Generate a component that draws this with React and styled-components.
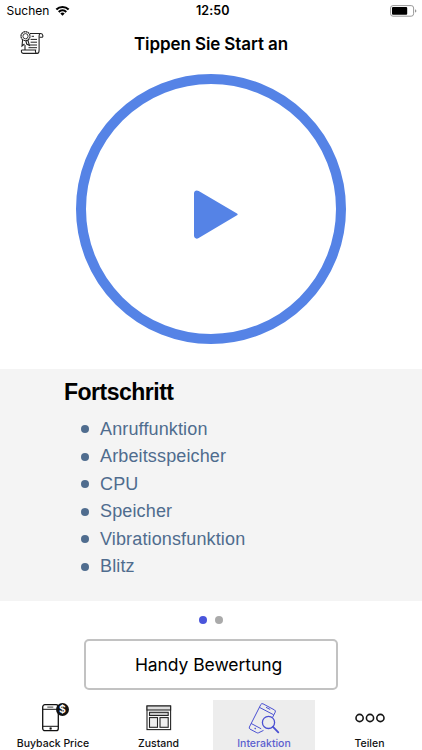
import styled, { createGlobalStyle } from "styled-components";

const progressItems = [
  "Anruffunktion",
  "Arbeitsspeicher",
  "CPU",
  "Speicher",
  "Vibrationsfunktion",
  "Blitz",
];

const WifiIcon = () => (
  <svg width="15" height="11" viewBox="0 0 15 11">
    <path d="M0.6 3.8 A9.8 9.8 0 0 1 14.4 3.8 L12.9 5.3 A7.7 7.7 0 0 0 2.1 5.3 Z" />
    <path d="M3 6.2 A6.4 6.4 0 0 1 12 6.2 L10.5 7.7 A4.3 4.3 0 0 0 4.5 7.7 Z" />
    <path d="M5.3 8.5 A3.1 3.1 0 0 1 9.7 8.5 L7.5 10.7 Z" />
  </svg>
);

const BatteryIcon = () => (
  <svg width="27" height="12" viewBox="0 0 27 12">
    <rect x="0.6" y="0.6" width="23" height="10.6" rx="2.4" fill="#fff" stroke="#999" />
    <rect x="2" y="2" width="15.2" height="7.8" rx="1" fill="#000" />
    <path d="M25 4.2 Q26.4 4.7 26.4 5.9 T25 7.6 Z" fill="#999" />
  </svg>
);

const CertificateIcon = () => (
  <svg width="24" height="24" viewBox="0 0 24 24" fill="none" stroke="#222" strokeWidth="1.1">
    <circle cx="5.5" cy="5.2" r="4.5" strokeWidth="1.2" strokeDasharray="1.9 0.4" />
    <circle cx="5.5" cy="5.2" r="2.6" strokeWidth="0.9" />
    <path d="M2.6 9 L2 15 L4.5 13 M7.8 9 L9.4 14.4 L6.7 13 L5.8 9.6" />
    <path d="M10 2.5 H20.5 C23.2 2.5 23.3 6.2 22.2 6.2 H19.8 M20 2.6 Q19.1 3.5 19.1 5 V19" />
    <path d="M5 14 V18.8 M1.5 19 H15.6 C15 21 16 22.4 17.3 22.4 C19 22.4 19.1 21 19.1 19 M17.3 22.4 H3.2 C1.5 22.4 1.2 20.5 1.5 19" />
    <path d="M11.6 5.3 H14 M10.6 8.4 H17 M10.6 11.2 H17 M9.5 14 H17 M8.5 16.7 H17" strokeWidth="1" />
  </svg>
);

const PlayIcon = () => (
  <svg width="44" height="50" viewBox="0 0 44 50" fill="#5583e6">
    <path d="M0 3.5 C0 .7 2.5 -.3 4.7 1 L43 23.5 Q44.3 24.5 43 25.3 L4.7 48 C2.5 49.4 0 48.4 0 45.6 Z" />
  </svg>
);

const PhonePriceIcon = () => (
  <svg width="28" height="30" viewBox="0 0 28 30" fill="none" stroke="#111">
    <rect x="1.7" y="1.7" width="15.6" height="26" rx="2.2" strokeWidth="1.3" />
    <path d="M1.7 6.3 H17.3 M1.7 23.3 H17.3" />
    <path d="M6.3 4.1 H12.3" strokeWidth="0.8" />
    <rect x="8.9" y="24.8" width="1.4" height="1.4" fill="#111" strokeWidth="0.6" />
    <circle cx="21.5" cy="6.5" r="6.5" fill="#111" stroke="none" />
    <text x="21.5" y="10.3" textAnchor="middle" fill="#fff" stroke="none" fontFamily="Inter, sans-serif" fontWeight="600" fontSize="10.5">$</text>
  </svg>
);

const LayoutIcon = () => (
  <svg width="26" height="26" viewBox="0 0 26 26" fill="none" stroke="#252525" strokeWidth="1.1">
    <rect x="1" y="1" width="23.6" height="23.6" />
    <rect x="1" y="1" width="23.6" height="4" fill="#ddd" />
    <rect x="3.5" y="7.3" width="18.7" height="3.2" fill="#ccc" />
    <rect x="3.5" y="12.6" width="8" height="9.7" fill="#eee" />
    <rect x="14" y="12.6" width="8.2" height="9.7" fill="#eee" />
  </svg>
);

const PhoneSearchIcon = () => (
  <svg width="32" height="33" viewBox="0 0 32 33" fill="none" stroke="#4a50d2" strokeWidth="1">
    <path d="M15.5 28.4 L10.5 30.8 Q9.7 31.2 8.8 30.7 L2 27.1 Q.8 26.4 1.4 25 L12.9 2.4 Q13.6 1.2 15 1.8 L26.6 8 Q27.9 8.8 27.2 10.2 L24.5 15.5" />
    <path d="M11.3 5.3 L25.5 12.7 M3 21.4 L13.2 26.8 M18 5.3 L22.2 7.5" />
    <path d="M6.6 26.2 L7.8 26.8" strokeWidth="1.4" />
    <circle cx="20.5" cy="20.4" r="6.1" strokeWidth="1.3" />
    <path d="M25 24.8 L30.3 30.3" strokeWidth="1.8" strokeLinecap="round" />
  </svg>
);

const MoreIcon = () => (
  <svg width="30" height="10" viewBox="0 0 30 10" fill="none" stroke="#161616" strokeWidth="1.6">
    <circle cx="4.6" cy="5" r="3.6" />
    <circle cx="15" cy="5" r="3.6" />
    <circle cx="25.4" cy="5" r="3.6" />
  </svg>
);

const tabs = [
  { label: "Buyback Price", icon: <PhonePriceIcon />, shift: 4 },
  { label: "Zustand", icon: <LayoutIcon /> },
  { label: "Interaktion", icon: <PhoneSearchIcon />, active: true },
  { label: "Teilen", icon: <MoreIcon /> },
];

const App = () => {
  return (
    <>
      <GlobalStyle />
      <Screen>
        <StatusBar>
          <Carrier>
            Suchen
            <WifiIcon />
          </Carrier>
          <Clock>12:50</Clock>
          <Battery>
            <BatteryIcon />
          </Battery>
        </StatusBar>
        <Header>
          <CertificateIcon />
          <Title>Tippen Sie Start an</Title>
        </Header>
        <StartArea>
          <StartButton aria-label="Start">
            <PlayIcon />
          </StartButton>
        </StartArea>
        <Progress>
          <ProgressTitle>Fortschritt</ProgressTitle>
          <ProgressList>
            {progressItems.map((item) => (
              <ProgressItem key={item}>{item}</ProgressItem>
            ))}
          </ProgressList>
        </Progress>
        <Pager>
          <Dot $active />
          <Dot />
        </Pager>
        <RatingButton>Handy Bewertung</RatingButton>
        <TabBar>
          {tabs.map((tab) => (
            <Tab key={tab.label} $active={tab.active}>
              <TabIcon $shift={tab.shift}>{tab.icon}</TabIcon>
              <TabLabel>{tab.label}</TabLabel>
            </Tab>
          ))}
        </TabBar>
      </Screen>
    </>
  );
};

export default App;

const GlobalStyle = createGlobalStyle`
  * {
    box-sizing: border-box;
  }

  body {
    margin: 0;
    background: #fff;
  }

  svg {
    display: block;
    flex: none;
  }
`;

const Screen = styled.main`
  display: flex;
  flex-direction: column;
  width: 422px;
  height: 750px;
  overflow: hidden;
  background: #fff;
  color: #000;
  font-family: Inter, "Liberation Sans", sans-serif;
`;

const StatusBar = styled.div`
  display: grid;
  grid-template-columns: 1fr auto 1fr;
  align-items: center;
  height: 21px;
  padding: 0 5px 0 6.5px;
`;

const Carrier = styled.span`
  display: flex;
  align-items: center;
  gap: 6px;
  font-size: 12px;
`;

const Clock = styled.span`
  padding-left: 2px;
  font-size: 12.5px;
  font-weight: 600;
  letter-spacing: 0.1px;
`;

const Battery = styled.span`
  display: flex;
  justify-content: flex-end;
`;

const Header = styled.header`
  display: grid;
  grid-template-columns: 24px 1fr 24px;
  align-items: center;
  height: 44px;
  padding: 0 20px;
`;

const Title = styled.h1`
  margin: 0;
  padding-top: 2px;
  font-size: 17px;
  font-weight: 600;
  letter-spacing: -0.1px;
  text-align: center;
`;

const StartArea = styled.section`
  display: flex;
  justify-content: center;
  height: 304px;
  padding-top: 9px;
`;

const StartButton = styled.button`
  display: flex;
  align-items: center;
  justify-content: center;
  width: 270px;
  height: 270px;
  padding: 11px 0 0 9px;
  border: 10px solid #5583e6;
  border-radius: 50%;
  background: #fff;
`;

const Progress = styled.section`
  height: 232px;
  padding: 10px 0 0 64px;
  background: #f4f4f4;
  font-family: "Liberation Sans", Arial, sans-serif;
`;

const ProgressTitle = styled.h2`
  margin: 0;
  font-size: 23px;
  line-height: 27px;
  letter-spacing: -0.5px;
`;

const ProgressList = styled.ul`
  margin: 9px 0 0;
  padding: 0 0 0 17px;
  list-style: none;
  color: #4f6c8e;
`;

const ProgressItem = styled.li`
  display: flex;
  align-items: center;
  gap: 11px;
  height: 27.5px;
  padding-top: 1px;
  font-size: 18px;
  letter-spacing: 0.14px;

  &::before {
    content: "";
    width: 8px;
    height: 8px;
    border-radius: 50%;
    background: #4f6c8e;
  }
`;

const Pager = styled.div`
  display: flex;
  align-items: center;
  justify-content: center;
  gap: 8px;
  height: 38px;
`;

const Dot = styled.span`
  width: 8px;
  height: 8px;
  border-radius: 50%;
  background: ${({ $active }) => ($active ? "#4a55db" : "#aaa")};
`;

const RatingButton = styled.button`
  align-self: center;
  width: 254px;
  height: 51px;
  padding: 0 5px 0 0;
  border: 2px solid #c2c2c2;
  border-radius: 5px;
  background: #fff;
  color: #000;
  font-family: inherit;
  font-size: 17.5px;
  letter-spacing: -0.07px;
`;

const TabBar = styled.nav`
  display: grid;
  grid-template-columns: 106px 105px 106px 105px;
  height: 50px;
  margin-top: auto;
`;

const Tab = styled.div`
  display: flex;
  flex-direction: column;
  align-items: center;
  margin: 0 2px;
  background: ${({ $active }) => ($active ? "#ededed" : "#fff")};
  color: ${({ $active }) => ($active ? "#5c60cf" : "#111")};
`;

const TabIcon = styled.span`
  display: flex;
  align-items: center;
  height: 36.5px;
  padding-left: ${({ $shift = 0 }) => $shift}px;
`;

const TabLabel = styled.span`
  font-size: 10.5px;
  font-weight: 500;
  line-height: 13px;
  white-space: nowrap;
`;
